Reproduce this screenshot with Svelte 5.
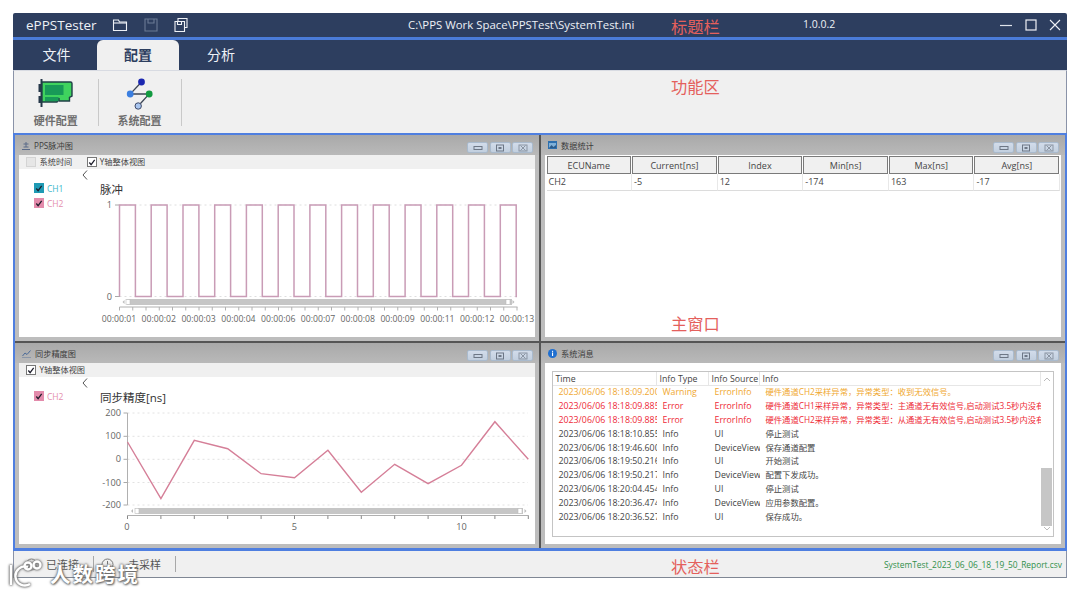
<script>
  let wavePath = 'M118.5 296.5V205';
  for (let i = 0; i < 13; i++) {
    const r = 118.5 + i * 31.73;
    const f = r + 15.9;
    if (i > 0) wavePath += ` V205`;
    if (f > 516) { wavePath += ` H516 V296.5`; break; }
    wavePath += ` H${f.toFixed(1)} V296.5 H${Math.min(r + 31.73, 516).toFixed(1)}`;
  }
  const topLabels = ['00:00:01','00:00:02','00:00:03','00:00:04','00:00:06','00:00:07','00:00:08','00:00:09','00:00:11','00:00:12','00:00:13'];
  const topTicks = Array.from({ length: 31 }, (_, i) => 118.5 + i * 13.25);
  const ys = [442, 498.7, 440.3, 448.7, 473.7, 477.7, 450.3, 492.3, 464.3, 483.7, 465.3, 421.7, 459.3];
  const line = ys.map((y, i) => `${(126.5 + i * 33.4).toFixed(1)},${y}`).join(' ');
  const yTicks = [[200, 413], [100, 436.3], [0, 459.3], [-100, 482.5], [-200, 505]];
  const columns = ['ECUName', 'Current[ns]', 'Index', 'Min[ns]', 'Max[ns]', 'Avg[ns]'];
  const stats = ['CH2', '-5', '12', '-174', '163', '-17'];
  const logs = [
    ['2023/06/06 18:18:09.200', 'Warning', 'ErrorInfo', '硬件通道CH2采样异常，异常类型：收到无效信号。', 'warn'],
    ['2023/06/06 18:18:09.885', 'Error', 'ErrorInfo', '硬件通道CH1采样异常，异常类型：主通道无有效信号,启动测试3.5秒内没有', 'err'],
    ['2023/06/06 18:18:09.885', 'Error', 'ErrorInfo', '硬件通道CH2采样异常，异常类型：从通道无有效信号,启动测试3.5秒内没有', 'err'],
    ['2023/06/06 18:18:10.855', 'Info', 'UI', '停止测试', ''],
    ['2023/06/06 18:19:46.600', 'Info', 'DeviceView', '保存通道配置', ''],
    ['2023/06/06 18:19:50.216', 'Info', 'UI', '开始测试', ''],
    ['2023/06/06 18:19:50.217', 'Info', 'DeviceView', '配置下发成功。', ''],
    ['2023/06/06 18:20:04.454', 'Info', 'UI', '停止测试', ''],
    ['2023/06/06 18:20:36.474', 'Info', 'DeviceView', '应用参数配置。', ''],
    ['2023/06/06 18:20:36.527', 'Info', 'UI', '保存成功。', '']
  ];
</script>

{#snippet winButtons()}
  <div class="pbtns">
    <span class="pbtn"><svg width="10" height="6" viewBox="0 0 10 6"><rect x="1" y="1.5" width="8" height="3" fill="none" stroke="#6d7786"/></svg></span>
    <span class="pbtn"><svg width="10" height="8" viewBox="0 0 10 8"><rect x="1.5" y="1" width="7" height="6" fill="none" stroke="#6d7786"/><rect x="3.5" y="3" width="3" height="2" fill="#6d7786"/></svg></span>
    <span class="pbtn"><svg width="10" height="8" viewBox="0 0 10 8"><rect x="1" y="1" width="8" height="6" fill="none" stroke="#8b95a3"/><path d="M2.5 1.5l5 5M7.5 1.5l-5 5" stroke="#8b95a3"/></svg></span>
  </div>
{/snippet}

{#snippet check(cls)}
  <span class="cb {cls}"><svg width="9" height="9" viewBox="0 0 9 9"><path d="M1.5 4.5l2 2.5 4-5.5" fill="none" stroke="#1c1c2a" stroke-width="1.4"/></svg></span>
{/snippet}

{#snippet chevron()}
  <span class="chev"><svg width="6" height="10" viewBox="0 0 6 10"><path d="M5 .5L1 5l4 4.500" fill="none" stroke="#555" stroke-width="1"/></svg></span>
{/snippet}

<div class="page">
<div class="window">
  <header class="title">
    <div class="t-left">
      <span class="app">ePPSTester</span>
      <svg class="ti" width="16" height="16" viewBox="0 0 16 16" fill="none" stroke="#eef1f6" stroke-width="1.1"><path d="M1.5 13.500V3h5l1 2h7v8.500z"/><path d="M1.500 6h13"/></svg>
      <svg class="ti" width="16" height="16" viewBox="0 0 16 16" fill="none" stroke="#6b7a95" stroke-width="1.1"><path d="M2 2h12v12H2z"/><path d="M5 2v4h6V2"/></svg>
      <svg class="ti" width="16" height="16" viewBox="0 0 16 16" fill="none" stroke="#eef1f6" stroke-width="1.1"><path d="M5 4V1.500h9v9h-2.500"/><path d="M2 4.500h9.500v10H2z"/><path d="M4.500 4.500v3h4v-3"/></svg>
    </div>
    <span class="path">C:\PPS Work Space\PPSTest\SystemTest.ini</span>
    <span class="ver">1.0.0.2</span>
    <div class="wc">
      <svg width="12" height="12" viewBox="0 0 12 12"><path d="M0 6.500h12" stroke="#dfe4ec" stroke-width="1.200"/></svg>
      <svg width="12" height="12" viewBox="0 0 12 12"><rect x="1" y="1" width="10" height="10" fill="none" stroke="#eef1f6" stroke-width="1.200"/></svg>
      <svg width="12" height="12" viewBox="0 0 12 12"><path d="M1 1l10 10M11 1L1 11" stroke="#eef1f6" stroke-width="1.100"/></svg>
    </div>
  </header>

  <nav class="tabs">
    <span class="tab first">文件</span>
    <span class="tab active">配置</span>
    <span class="tab">分析</span>
  </nav>

  <section class="ribbon">
    <div class="rb r1">
      <svg width="36" height="30" viewBox="0 0 36 30">
        <path d="M2.500 1h2v28h-2z" fill="#26384a"/>
        <path d="M.5 6h3v8h-3zM.5 18h3v7h-3z" fill="#26384a"/>
        <path d="M4 4h28.500a1.500 1.500 0 0 1 1.500 1.500V18l-2.500 1.500V23H21v-3l-2 4H4z" fill="#3fd35e" stroke="#1f3f46" stroke-width="1.400"/>
        <rect x="7" y="7" width="18.500" height="10" fill="#189a58"/>
        <rect x="7" y="19" width="13.500" height="4" fill="#189a58"/>
      </svg>
      <span>硬件配置</span>
    </div>
    <div class="rb">
      <svg width="30" height="34" viewBox="0 0 30 34">
        <path d="M16.500 4L5.200 16h19L13.200 28" fill="none" stroke="#3d4656" stroke-width="1.300"/>
        <circle cx="16.500" cy="4" r="3.400" fill="#1b27b0"/>
        <circle cx="5.200" cy="16" r="3.400" fill="#3b7fe0"/>
        <circle cx="24.200" cy="16" r="3.400" fill="#129a40"/>
        <circle cx="13.200" cy="28" r="3.200" fill="#a9c6f0" stroke="#3f4a68" stroke-width="1"/>
      </svg>
      <span>系统配置</span>
    </div>
  </section>

  <main class="main">
    <section class="panel">
      <div class="phead">
        <svg class="pi" width="8" height="9" viewBox="0 0 8 9"><path d="M0 8.500h8M4 1v5M1.500 3h5M1.500 6h5" stroke="#5a6a88" fill="none"/></svg>
        <span class="ptitle">PPS脉冲图</span>
        {@render winButtons()}
      </div>
      <div class="ptool">
        <span class="cb off"></span><span class="tl">系统时间</span>
        <span class="gap"></span>
        {@render check('')}<span class="tl tight">Y轴整体视图</span>
      </div>
      <div class="pbody">
        <div class="side">
          {@render chevron()}
          <div class="leg c1">{@render check('teal')}<span>CH1</span></div>
          <div class="leg c2">{@render check('pink')}<span>CH2</span></div>
        </div>
        <svg class="chart" width="437" height="168" viewBox="0 0 437 168">
          <g transform="translate(-99,-169)">
            <text x="99" y="194" class="ctitle">脉冲</text>
            <path d="M118.500 205H516M118.500 296.500H516" stroke="#dedede" stroke-dasharray="2 3"/>
            <path d="M118.500 205V297M114 205h4.500M114 296.500h4.500" stroke="#a8a8a8" fill="none"/>
            <text x="111" y="208" class="ax" text-anchor="end">1</text>
            <text x="111" y="300" class="ax" text-anchor="end">0</text>
            <path d={wavePath} fill="none" stroke="#c99cb6" stroke-width="1.500"/>
            <rect x="126" y="299" width="385" height="6" fill="#c6c6c6"/>
            <rect x="125" y="299.500" width="4" height="5" fill="#fff" stroke="#bbb" stroke-width=".6"/>
            <rect x="505" y="299.500" width="4" height="5" fill="#fff" stroke="#bbb" stroke-width=".6"/>
            <path d="M123.500 300l-2 2 2 2zM511.500 300l2 2-2 2z" fill="#bbb"/>
            <path d="M118.500 307H516.500" stroke="#b0b0b0"/>
            {#each topTicks as t}<path d="M{t} 307v3.500" stroke="#b0b0b0"/>{/each}
            {#each topLabels as l, i}<text x={118 + i * 39.8} y="322" class="ax tick" text-anchor="middle">{l}</text>{/each}
          </g>
        </svg>
      </div>
    </section>

    <section class="panel">
      <div class="phead">
        <svg class="pi" width="9" height="8" viewBox="0 0 9 8"><rect width="9" height="8" fill="#2d6fae"/><rect x="1" y="2" width="7" height="5" fill="#7fb0d8"/><path d="M1 7l2.500-3 2 2 2.500-2v3z" fill="#2a5a8a"/></svg>
        <span class="ptitle">数据统计</span>
        {@render winButtons()}
      </div>
      <div class="pbody stats">
        <div class="tgrid">
          {#each columns as c}<span class="th">{c}</span>{/each}
          {#each stats as s}<span class="td">{s}</span>{/each}
        </div>
      </div>
    </section>

    <section class="panel">
      <div class="phead">
        <svg class="pi" width="9" height="9" viewBox="0 0 9 9"><path d="M0 8.500h9" stroke="#8a96a8"/><path d="M.5 7l2.500-3 2 1.500L8.500 1.500" stroke="#4a6a98" fill="none"/></svg>
        <span class="ptitle">同步精度图</span>
        {@render winButtons()}
      </div>
      <div class="ptool">
        {@render check('')}<span class="tl">Y轴整体视图</span>
      </div>
      <div class="pbody">
        <div class="side">
          {@render chevron()}
          <div class="leg c2">{@render check('pink')}<span>CH2</span></div>
        </div>
        <svg class="chart" width="437" height="169" viewBox="0 0 437 169">
          <g transform="translate(-99,-377)">
            <text x="99" y="402" class="ctitle">同步精度[ns]</text>
            {#each yTicks as [v, y]}
              <path d="M126.500 {y}H527" stroke="#e2e2e2" stroke-dasharray="2 3"/>
              <path d="M122.500 {y}h4" stroke="#a8a8a8"/>
              <text x="120" y={y + 3} class="ax" text-anchor="end">{v}</text>
            {/each}
            <path d="M126.500 413V505" stroke="#b0b0b0"/>
            <polyline points={line} fill="none" stroke="#d57f98" stroke-width="1.400"/>
            <rect x="137" y="508" width="385" height="6" fill="#c6c6c6"/>
            <rect x="134" y="508.500" width="4" height="5" fill="#fff" stroke="#bbb" stroke-width=".6"/>
            <rect x="517" y="508.500" width="4" height="5" fill="#fff" stroke="#bbb" stroke-width=".6"/>
            <path d="M132 509l-2 2 2 2zM523.500 509l2 2-2 2z" fill="#bbb"/>
            <path d="M126.500 515.500H527.500" stroke="#b0b0b0"/>
            {#each ys as _, i}<path d="M{126.500 + i * 33.4} 515.500v3.500" stroke="#888"/>{/each}
            <text x="126" y="530" class="ax" text-anchor="middle">0</text>
            <text x="293.500" y="530" class="ax" text-anchor="middle">5</text>
            <text x="460.500" y="530" class="ax" text-anchor="middle">10</text>
          </g>
        </svg>
      </div>
    </section>

    <section class="panel">
      <div class="phead">
        <svg class="pi" width="9" height="9" viewBox="0 0 9 9"><circle cx="4.500" cy="4.500" r="4.500" fill="#1f6fd0"/><rect x="4" y="3.500" width="1.100" height="3.500" fill="#fff"/><rect x="4" y="1.800" width="1.100" height="1.100" fill="#fff"/></svg>
        <span class="ptitle">系统消息</span>
        {@render winButtons()}
      </div>
      <div class="pbody logwrap">
        <div class="log">
          <div class="lrows">
            <div class="lh">
              <span class="c-t">Time</span><span class="c-y">Info Type</span><span class="c-s">Info Source</span><span class="c-i">Info</span>
            </div>
            {#each logs as r}
              <div class="lr {r[4]}">
                <span class="c-t">{r[0]}</span><span class="c-y">{r[1]}</span><span class="c-s">{r[2]}</span><span class="c-i">{r[3]}</span>
              </div>
            {/each}
          </div>
          <div class="sb">
            <svg width="8" height="5" viewBox="0 0 8 5"><path d="M1 4l3-3 3 3" fill="none" stroke="#bbb"/></svg>
            <span class="thumb"></span>
            <svg width="8" height="5" viewBox="0 0 8 5"><path d="M1 1l3 3 3-3" fill="none" stroke="#bbb"/></svg>
          </div>
        </div>
      </div>
    </section>
  </main>

  <footer class="status">
    <svg class="si" width="13" height="13" viewBox="0 0 13 13"><circle cx="6.500" cy="6.500" r="5.500" fill="none" stroke="#777"/></svg>
    <span class="st s1">已连接</span>
    <i class="vs"></i>
    <svg class="si2" width="13" height="13" viewBox="0 0 13 13"><circle cx="6.500" cy="6.500" r="5.500" fill="none" stroke="#777"/><path d="M6.500 3v3.500" stroke="#777"/></svg>
    <span class="st s2">未采样</span>
    <i class="vs"></i>
    <span class="report">SystemTest_2023_06_06_18_19_50_Report.csv</span>
  </footer>

  <span class="note n1">标题栏</span>
  <span class="note n2">功能区</span>
  <span class="note n3">主窗口</span>
  <span class="note n4">状态栏</span>

  <div class="wm" aria-hidden="true">
    <svg width="38" height="28" viewBox="0 0 38 28" fill="none" stroke="#fff" stroke-width="2.400"><path d="M3 6v20"/><path d="M20 8a9.500 9.500 0 1 0 2 17"/><circle cx="20" cy="7" r="3.500"/><circle cx="29" cy="6" r="3.500"/></svg>
    <span>人数跨境</span>
  </div>
</div>
</div>

<style>
  :global(body) { margin: 0; background: #fff; }
  .page { box-sizing: border-box; height: 592px; padding: 13px 0 0 13px; background: #fff; }
  .window {
    position: relative; box-sizing: border-box; width: 1054px; height: 565px;
    display: flex; flex-direction: column; overflow: visible;
    font-family: "Open Sans", "Noto Sans CJK SC", sans-serif; color: #444;
  }
  .title {
    height: 24px; flex: none; background: #2d3e5f; color: #eef1f6; display: flex; align-items: center;
    border-bottom: 3px solid #4a7bd8; border-radius: 2px 2px 0 0; position: relative;
  }
  .t-left { display: flex; align-items: center; padding-left: 13px; }
  .app { font-size: 13.500px; width: 86px; }
  .ti { margin-right: 14.500px; }
  .path { position: absolute; left: 395px; top: 3px; font-size: 11.400px; line-height: 17px; white-space: nowrap; }
  .ver { position: absolute; left: 790px; top: 3px; font-size: 10.500px; line-height: 17px; }
  .wc { position: absolute; left: 987px; top: 6px; display: flex; gap: 12.500px; }
  .wc svg { display: block; }

  .tabs { height: 30px; flex: none; background: #2d3e5f; display: flex; box-sizing: border-box; }
  .tab { width: 84px; box-sizing: border-box; text-align: center; color: #eef1f6; font-size: 14px; line-height: 30px; }
  .tab.first { padding-left: 3px; }
  .tab.active { width: 82px; background: #f0f0f0; color: #2d3e5f; font-weight: 700; border-radius: 6px 6px 0 0; }

  .ribbon {
    height: 63px; flex: none; box-sizing: border-box; background: #f0f0f0; display: flex;
    border-left: 1px solid #8a93a8; border-right: 1px solid #8a93a8; border-top: 1px solid #d8dbe2; padding-top: 8px;
  }
  .rb {
    width: 83px; height: 47px; box-sizing: border-box; border-right: 1px solid #c9c9c9; display: flex; flex-direction: column;
    align-items: center; justify-content: space-between; color: #6e6e6e; font-size: 11px; font-weight: 700;
  }
  .rb.r1 { width: 84.500px; }
  .rb svg { display: block; margin-top: -1px; }
  .rb span { line-height: 14px; margin-bottom: -2px; }

  .main {
    height: 418px; flex: none; box-sizing: border-box; display: grid;
    grid-template-columns: 524px 524px; grid-template-rows: 206px 205px; gap: 2px;
    background: #555; border: 2px solid #4f7fe0; border-bottom-width: 3px;
  }
  .panel { display: flex; flex-direction: column; background: #bdbdbd; padding: 0 4px 4px 3.500px; min-width: 0; min-height: 0; }
  .phead {
    height: 20px; flex: none; margin: 0 -4px 0 -3.500px; padding: 0 6px 0 7px; box-sizing: border-box;
    background: linear-gradient(#a9a9a9, #b9b9b9); display: flex; align-items: center; gap: 4px;
  }
  .pi { flex: none; }
  .ptitle { font-size: 8.200px; color: #3c3c3c; }
  .pbtns { margin-left: auto; display: flex; gap: 1.500px; align-self: flex-end; margin-bottom: 2px; }
  .pbtn {
    width: 21px; height: 11px; box-sizing: border-box; background: linear-gradient(#d2dcea, #c2cfdf);
    border: 1px solid #a9bacd; border-radius: 2px; display: flex; align-items: center; justify-content: center;
  }
  .ptool { height: 14px; flex: none; background: #f0f0f0; display: flex; align-items: center; padding-left: 7.500px; }
  .tl { font-size: 8.200px; color: #444; margin-left: 3.500px; line-height: 14px; }
  .tl.tight { margin-left: 2.500px; }
  .gap { width: 15px; }
  .cb {
    width: 10px; height: 10px; box-sizing: border-box; flex: none; border: 1px solid #777; background: #fff;
    display: flex; align-items: center; justify-content: center;
  }
  .cb svg { display: block; }
  .cb.off { background: #e6e6e6; border-color: #d4d4d4; }
  .cb.teal { background: #1f9ab4; border-color: #1f9ab4; }
  .cb.pink { background: #e38bab; border-color: #e38bab; }
  .pbody { flex: 1; background: #fff; display: flex; min-height: 0; overflow: hidden; }
  .side { width: 81px; flex: none; display: flex; flex-direction: column; }
  .chev { height: 11.500px; display: flex; justify-content: flex-end; align-items: center; padding-right: 12px; }
  .chev svg { display: block; }
  .leg { display: flex; align-items: center; gap: 3px; padding-left: 15.500px; height: 15px; font-size: 8.500px; }
  .leg .cb { border-color: transparent; }
  .c1 { color: #3cb8cc; }
  .c2 { color: #e48fae; }
  .chart { display: block; flex: none; }
  .chart text { font-family: "Open Sans", "Noto Sans CJK SC", sans-serif; }
  .ctitle { font-size: 11.500px; fill: #333; }
  .ax { font-size: 9.200px; fill: #666; }
  .ax.tick { font-size: 8.700px; }

  .stats { padding: 1px 0 0 2px; display: block; }
  .tgrid { display: grid; grid-template-columns: repeat(6, 85.600px); grid-template-rows: 18px 17px; width: 514px; }
  .th {
    background: #f0f0f0; border: 1px solid #7a7a7a; border-width: 1px 1.500px 1.500px 1px; margin-right: 1px;
    font-size: 9px; text-align: center; line-height: 17px; color: #444;
  }
  .td { border-right: 1px solid #e8e8e8; border-bottom: 1px solid #dcdcdc; font-size: 9px; line-height: 16px; padding-left: 2px; color: #444; }

  .logwrap { padding: 7.500px 7.500px 7px 7px; box-sizing: border-box; }
  .log { flex: 1; display: flex; border: 1px solid #c4c4c4; border-width: 1px 1px 1.500px 1px; box-sizing: border-box; min-width: 0; }
  .lrows { flex: 1; min-width: 0; overflow: hidden; }
  .lh { display: flex; height: 14.500px; line-height: 14px; font-size: 8.800px; color: #444; border-bottom: 1px solid #e6e6e6; box-sizing: border-box; }
  .lh span { border-right: 1px solid #e6e6e6; box-sizing: border-box; padding-left: 3px; }
  .lr { display: flex; height: 13.900px; line-height: 13.900px; font-size: 8.800px; color: #444; }
  .lr span { padding-left: 6px; box-sizing: border-box; white-space: nowrap; overflow: hidden; }
  .lr.warn { color: #f0a830; }
  .lr.err { color: #ee2a36; }
  .lr .c-i { padding-left: 6px; font-size: 8.300px; margin-top: -1px; }
  .c-t { width: 104px; flex: none; }
  .c-y { width: 52px; flex: none; }
  .c-s { width: 51px; flex: none; }
  .c-i { flex: 1; min-width: 0; }
  .sb { width: 12px; flex: none; display: flex; flex-direction: column; align-items: center; padding: 5px 0 5px; box-sizing: border-box; }
  .sb svg { display: block; flex: none; }
  .thumb { width: 11px; height: 58px; background: #c6c6c6; margin: auto 0 0; }

  .status {
    height: 27px; flex: none; box-sizing: border-box; background: #f0f0f0; display: flex; align-items: center;
    border-left: 1px solid #8a93a8; border-right: 1px solid #8a93a8; border-bottom: 1px solid #7f8794;
  }
  .si { margin-left: 11px; flex: none; }
  .si2 { margin-left: 7px; flex: none; }
  .st { font-size: 11px; color: #555; line-height: 15px; }
  .s1 { margin-left: 8px; }
  .s2 { margin-left: 14px; }
  .vs { width: 1px; height: 16px; background: #a8a8a8; margin-left: 14px; flex: none; }
  .report { margin-left: auto; margin-right: 4px; font-size: 8.400px; color: #2f8f4a; white-space: nowrap; }

  .note { position: absolute; left: 658px; font-size: 16.300px; line-height: 20px; color: #e4605c; font-family: "Noto Sans CJK SC", sans-serif; }
  .n1 { top: 3px; }
  .n2 { top: 63px; }
  .n3 { top: 300px; }
  .n4 { top: 543px; }

  .wm {
    position: absolute; left: -5px; top: 546px; display: flex; align-items: center; gap: 4px;
    color: #fff; font-family: "Noto Sans CJK SC", sans-serif; font-weight: 700; font-size: 20.500px; line-height: 28px; letter-spacing: 2px;
    text-shadow: 0 0 2px #666, 0 0 3px #666, 1px 1px 2px #777; pointer-events: none;
  }
  .wm svg { filter: drop-shadow(0 0 1px #666) drop-shadow(0 0 1px #888); }
</style>
